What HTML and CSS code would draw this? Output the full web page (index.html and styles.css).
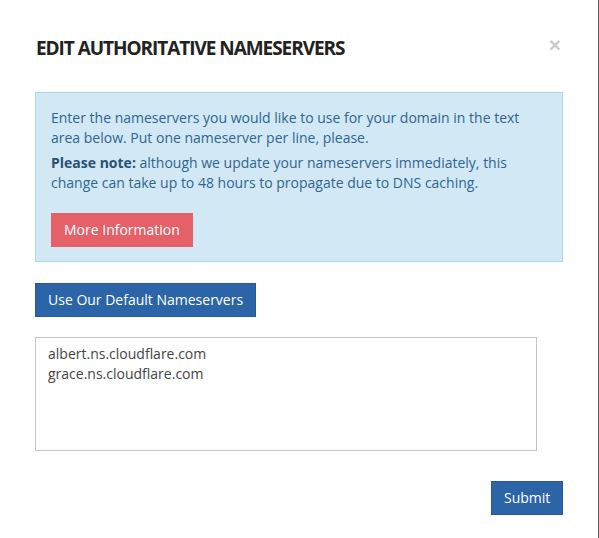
FILE: index.html
```html
<!DOCTYPE html>
<html>
<head>
<meta charset="utf-8">
<link rel="stylesheet" href="styles.css">
</head>
<body>
<div class="modal">
  <div class="modal-header">
    <h4 class="modal-title">EDIT AUTHORITATIVE NAMESERVERS</h4>
    <button class="close" type="button">&times;</button>
  </div>
  <div class="modal-body">
    <div class="alert">
      <p>Enter the nameservers you would like to use for your domain in the text area below. Put one nameserver per line, please.</p>
      <p><strong>Please note:</strong> although we update your nameservers immediately, this change can take up to 48 hours to propagate due to DNS caching.</p>
      <a class="btn btn-danger" href="#">More Information</a>
    </div>
    <div class="default-row">
      <button class="btn btn-primary" type="button">Use Our Default Nameservers</button>
    </div>
    <textarea class="ns-input">albert.ns.cloudflare.com
grace.ns.cloudflare.com</textarea>
    <div class="footer">
      <button class="btn btn-primary" type="button">Submit</button>
    </div>
  </div>
</div>
</body>
</html>
```
FILE: styles.css
```css
html, body {
  margin: 0;
  padding: 0;
  background: #ffffff;
}
body {
  font-family: "Open Sans", "Liberation Sans", sans-serif;
  font-size: 14px;
  line-height: 20px;
  color: #333333;
}
.modal {
  width: 598px;
  height: 538px;
  border-right: 1px solid #5a5a5a;
  box-sizing: content-box;
}
.modal-header {
  display: flex;
  justify-content: space-between;
  align-items: flex-start;
  padding: 35px 37px 0 36px;
  height: 92px;
  box-sizing: border-box;
}
.modal-title {
  margin: 0;
  font-size: 19px;
  line-height: 26px;
  font-weight: 700;
  color: #222222;
  letter-spacing: -1.05px;
}
.close {
  border: 0;
  background: none;
  padding: 0;
  margin-top: 0;
  font-family: "Liberation Sans", sans-serif;
  font-size: 21px;
  font-weight: 700;
  line-height: 20px;
  color: #000000;
  opacity: 0.2;
  cursor: pointer;
}
.modal-body {
  padding: 0 35px 0 35px;
}
.alert {
  background: #d2e8f5;
  border: 1px solid #a9dced;
  color: #2f6590;
  padding: 15px 15px 14px 15px;
}
.alert p {
  margin: 0 0 5px 0;
}
.alert p:last-of-type {
  margin-bottom: 20px;
}
.alert strong {
  font-weight: 700;
  color: #245374;
}
.btn {
  display: inline-block;
  box-sizing: border-box;
  height: 34px;
  padding: 6px 12px;
  font-family: "Open Sans", "Liberation Sans", sans-serif;
  font-size: 14px;
  line-height: 20px;
  border: 1px solid transparent;
  border-radius: 0;
  text-decoration: none;
  cursor: pointer;
  vertical-align: top;
}
.btn-danger {
  background: #e66068;
  border-color: #e66068;
  color: #ffffff;
}
.btn-primary {
  background: #2b65a8;
  border-color: #245a98;
  color: #ffffff;
}
.default-row {
  margin-top: 21px;
  height: 34px;
}
.ns-input {
  display: block;
  margin-top: 20px;
  width: 502px;
  height: 114px;
  box-sizing: border-box;
  border: 1px solid #c6c6c6;
  border-radius: 0;
  padding: 6px 12px;
  font-family: "Open Sans", "Liberation Sans", sans-serif;
  font-size: 14px;
  line-height: 20px;
  color: #444444;
  resize: none;
  outline: none;
}
.footer {
  margin-top: 30px;
  display: flex;
  justify-content: flex-end;
}
.footer .btn {
  width: 72px;
}
```
